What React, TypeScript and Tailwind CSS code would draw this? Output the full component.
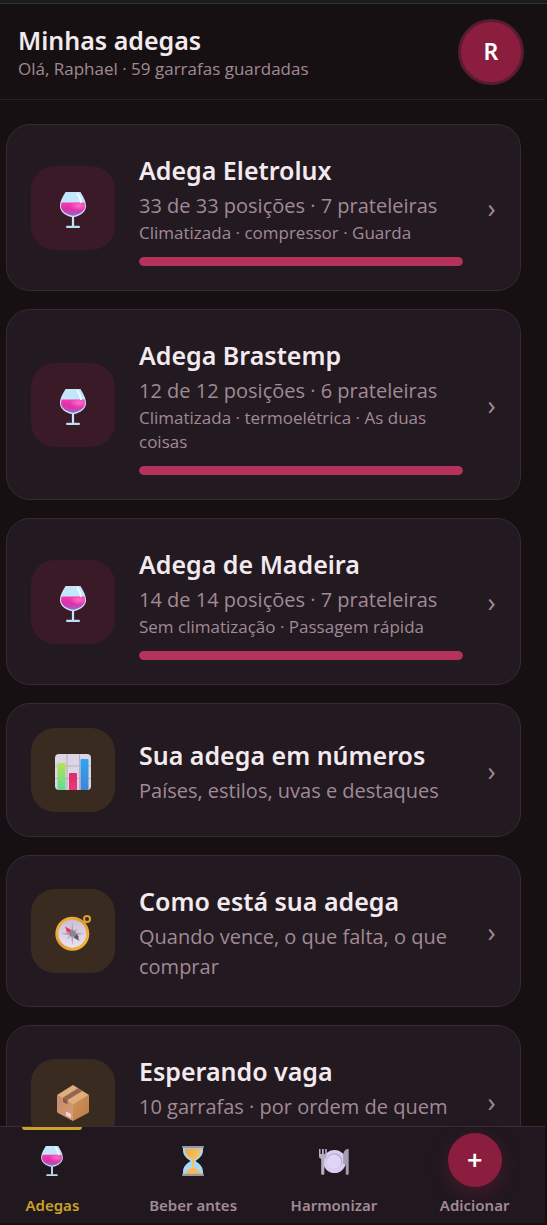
import { useId, useState } from 'react'
import type { ReactNode } from 'react'

interface IconProps {
  className?: string
}

function WineIcon({ className }: IconProps) {
  const id = useId()
  return (
    <svg className={className} viewBox="0 0 36 36" fill="none" aria-hidden="true">
      <defs>
        <linearGradient id={`${id}-wine`} x1="0" y1="0" x2="0" y2="1">
          <stop offset="0" stopColor="#f23bb0" />
          <stop offset="0.5" stopColor="#e02fa8" />
          <stop offset="1" stopColor="#a063c4" />
        </linearGradient>
        <radialGradient id={`${id}-shine`} cx="0.75" cy="0.25" r="0.4">
          <stop offset="0" stopColor="#ff6fc6" />
          <stop offset="1" stopColor="#ff6fc6" stopOpacity="0" />
        </radialGradient>
      </defs>
      <path d="M10.500 0h15c1.800 3.600 5.500 8 5.500 14.500 0 5-5.500 9.300-11.500 10.500h-3C10.500 23.800 5 19.500 5 14.500 5 8 8.700 3.600 10.500 0z" fill="#c3e6fb" />
      <path d="M6.800 10.500h22.400c.5 1.300.8 2.600.8 4 0 4.300-5.500 8.300-12 9.300-6.500-1-12-5-12-9.300 0-1.400.3-2.700.8-4z" fill={`url(#${id}-wine)`} />
      <path d="M6.800 10.500h22.400c.5 1.300.8 2.600.8 4 0 4.300-5.500 8.300-12 9.300-6.500-1-12-5-12-9.300 0-1.400.3-2.700.8-4z" fill={`url(#${id}-shine)`} />
      <path d="M22.500 2c1.800 2.500 3 5 3.500 8" stroke="#f2fbff" strokeWidth="2" strokeLinecap="round" />
      <path d="M16.900 24.500h2.200v10h-2.200z" fill="#c3e6fb" />
      <rect x="11" y="33.800" width="14" height="2.200" rx="1.100" fill="#b9dff0" />
    </svg>
  )
}

function ChartIcon({ className }: IconProps) {
  const id = useId()
  return (
    <svg className={className} viewBox="0 0 36 36" fill="none" aria-hidden="true">
      <defs>
        <linearGradient id={`${id}-green`} x1="0" y1="0" x2="0" y2="1">
          <stop offset="0" stopColor="#b5e256" />
          <stop offset="1" stopColor="#62dc90" />
        </linearGradient>
        <linearGradient id={`${id}-pink`} x1="0" y1="0" x2="0" y2="1">
          <stop offset="0" stopColor="#d92f68" />
          <stop offset="1" stopColor="#f0357c" />
        </linearGradient>
        <linearGradient id={`${id}-blue`} x1="0" y1="0" x2="0" y2="1">
          <stop offset="0" stopColor="#2fa5f3" />
          <stop offset="1" stopColor="#4383d3" />
        </linearGradient>
      </defs>
      <rect width="36" height="36" rx="4" fill="#dcd5e3" />
      <path d="M12 0v36M24.500 0v36M0 12h36M0 24.500h36" stroke="#b9b1c3" strokeWidth="1" />
      <path d="M2.500 10a1 1 0 011-1h6a1 1 0 011 1v26H4a1.500 1.500 0 01-1.500-1.500z" fill={`url(#${id}-green)`} />
      <path d="M14 20a1 1 0 011-1h6a1 1 0 011 1v16h-8z" fill={`url(#${id}-pink)`} />
      <path d="M25.500 6a1 1 0 011-1h6a1 1 0 011 1v28.500A1.500 1.500 0 0132 36h-6.500z" fill={`url(#${id}-blue)`} />
    </svg>
  )
}

function CompassIcon({ className }: IconProps) {
  const id = useId()
  return (
    <svg className={className} viewBox="0 0 36 36" fill="none" aria-hidden="true">
      <defs>
        <linearGradient id={`${id}-ring`} x1="0" y1="0" x2="1" y2="1">
          <stop offset="0" stopColor="#f2b63c" />
          <stop offset="0.5" stopColor="#e39a33" />
          <stop offset="1" stopColor="#f4c03f" />
        </linearGradient>
        <linearGradient id={`${id}-face`} x1="0" y1="0" x2="0" y2="1">
          <stop offset="0" stopColor="#c9bdd3" />
          <stop offset="1" stopColor="#ebe3f2" />
        </linearGradient>
      </defs>
      <circle cx="32" cy="4" r="3" stroke="#dd9f2c" strokeWidth="2" />
      <path d="M26 7.500l3.500-2 1.800 2.500-2.300 3z" fill="#e2a32f" />
      <circle cx="17.300" cy="18.700" r="15.500" fill={`url(#${id}-face)`} stroke={`url(#${id}-ring)`} strokeWidth="3" />
      <path d="M17.300 7.500l1.200 9.500 10 1.700-10 1.700-1.200 9.500-1.200-9.500-10-1.700 10-1.700z" fill="#aaa2b2" />
      <path d="M12.500 14l9.600 9.600M22.200 14l-9.700 9.600" stroke="#b6aebe" strokeWidth="1.500" />
      <path d="M10 11.500l6.500 3.500-2.500 3-2.500-1.500-.5-2.500z" fill="#ef3560" />
      <path d="M24.500 26l-6-3.500 3-3.500 2 2v3z" fill="#5d5762" />
      <circle cx="17.500" cy="18.500" r="3.300" fill="#8c8492" />
    </svg>
  )
}

function BoxIcon({ className }: IconProps) {
  const id = useId()
  return (
    <svg className={className} viewBox="0 0 36 36" fill="none" aria-hidden="true">
      <defs>
        <linearGradient id={`${id}-left`} x1="0" y1="0" x2="1" y2="1">
          <stop offset="0" stopColor="#c58b6f" />
          <stop offset="1" stopColor="#d79a72" />
        </linearGradient>
        <linearGradient id={`${id}-right`} x1="0" y1="0" x2="1" y2="1">
          <stop offset="0" stopColor="#cf955c" />
          <stop offset="1" stopColor="#bd7a48" />
        </linearGradient>
      </defs>
      <path d="M2 10l16 9v17L3 28a2 2 0 01-1-1.700z" fill={`url(#${id}-left)`} />
      <path d="M34 10l-16 9v17l15-8a2 2 0 001-1.700z" fill={`url(#${id}-right)`} />
      <path d="M18 0l16 10-16 9.500L2 10z" fill="#dfae7b" />
      <path d="M23 3.200l4.500 2.700L12.500 15 8 12.500z" fill="#96654f" />
      <path d="M8 12.500l4.500 2.500v4.500L8 17z" fill="#88594a" />
      <path d="M11 26.500l5 2.500v4l-5-2.500z" fill="#e5d9e6" />
    </svg>
  )
}

function HourglassIcon({ className }: IconProps) {
  const id = useId()
  return (
    <svg className={className} viewBox="0 0 30 30" fill="none" aria-hidden="true">
      <defs>
        <linearGradient id={`${id}-sand`} x1="0" y1="0" x2="1" y2="1">
          <stop offset="0" stopColor="#f0a93f" />
          <stop offset="1" stopColor="#ffd36b" />
        </linearGradient>
      </defs>
      <path d="M5 1h20v3c0 5-3 8-7.500 11C22 18 25 21 25 26v3H5v-3c0-5 3-8 7.500-11C8 12 5 9 5 4z" fill="#a8d8f7" />
      <path d="M7 3h16c0 5-2.500 8-7 10.500v9.500h-2v-9.500C9.500 11 7 8 7 3z" fill={`url(#${id}-sand)`} />
      <path d="M8 28c0-3.500 3.500-6 7-6s7 2.500 7 6z" fill="#f9b65c" />
      <rect x="4" y="0" width="22" height="2.200" rx="1" fill="#99989f" />
      <rect x="4" y="27.800" width="22" height="2.200" rx="1" fill="#99989f" />
    </svg>
  )
}

function PlateIcon({ className }: IconProps) {
  return (
    <svg className={className} viewBox="0 0 30 30" fill="none" aria-hidden="true">
      <circle cx="15.500" cy="15.500" r="11.500" fill="#d9cdf2" />
      <circle cx="15.500" cy="15" r="7.800" fill="#b9abdb" />
      <circle cx="15" cy="15.800" r="7.200" fill="#dfd5f6" />
      <path d="M0 3h1.500v5H3V3h1.800v5h1.400V3h1.600v7.500C7.800 12 6.500 13 5.300 13v15a.8.8 0 01-.8.8H3a.8.8 0 01-.8-.8V13C1 12.600 0 11.600 0 10.500z" fill="#b7adc0" />
      <path d="M29.700 3v25a.8.8 0 01-.8.800h-1.300a.8.8 0 01-.8-.8V18H25a.8.8 0 01-.8-.8V10c0-4 2-7 4.500-7z" fill="#a59cae" />
    </svg>
  )
}

interface Cellar {
  name: string
  used: number
  total: number
  shelves: number
  notes: string
}

const cellars: Cellar[] = [
  { name: 'Adega Eletrolux', used: 33, total: 33, shelves: 7, notes: 'Climatizada · compressor · Guarda' },
  { name: 'Adega Brastemp', used: 12, total: 12, shelves: 6, notes: 'Climatizada · termoelétrica · As duas coisas' },
  { name: 'Adega de Madeira', used: 14, total: 14, shelves: 7, notes: 'Sem climatização · Passagem rápida' },
]

const shortcuts = [
  { title: 'Sua adega em números', text: 'Países, estilos, uvas e destaques', Icon: ChartIcon },
  { title: 'Como está sua adega', text: 'Quando vence, o que falta, o que comprar', Icon: CompassIcon },
  { title: 'Esperando vaga', text: '10 garrafas · por ordem de quem chegou', Icon: BoxIcon },
]

const tabs = [
  { id: 'adegas', label: 'Adegas', Icon: WineIcon },
  { id: 'beber', label: 'Beber antes', Icon: HourglassIcon },
  { id: 'harmonizar', label: 'Harmonizar', Icon: PlateIcon },
]

interface CardProps {
  icon: ReactNode
  iconBg: string
  title: string
  text: string
  children?: ReactNode
}

function Card({ icon, iconBg, title, text, children }: CardProps) {
  return (
    <a
      href="#"
      className="flex shrink-0 items-center gap-6 rounded-3xl border border-[#382932] bg-[#231920] p-6"
    >
      <div className={`flex size-21 shrink-0 items-center justify-center rounded-3xl pt-1 ${iconBg}`}>{icon}</div>
      <div className="min-w-0 flex-1">
        <h2 className="font-['Noto_Sans',sans-serif] text-[25px] leading-[42px] font-semibold text-[#f3eaee]">{title}</h2>
        <p className="text-[20px] leading-[30px] text-[#a08a95]">{text}</p>
        {children}
      </div>
      <span className="w-[9px] shrink-0 text-center text-[27px] leading-none text-[#a08a95]">›</span>
    </a>
  )
}

export default function App() {
  const [active, setActive] = useState('adegas')

  return (
    <div className="flex h-screen flex-col bg-[#171012] pr-[2px] pb-[2px] font-['Open_Sans','Noto_Sans',sans-serif]">
      <div className="-mr-[2px] h-1 shrink-0 border-b border-[#33302f] bg-[#1b1d1b]" />

      <header className="flex h-24 shrink-0 items-center justify-between border-b border-[#2a2025] pr-6 pl-[18px]">
        <div>
          <h1 className="font-['Noto_Sans',sans-serif] text-[25px] leading-[34px] font-semibold text-[#f3eaee]">
            Minhas adegas
          </h1>
          <p className="text-[17px] leading-6 text-[#a08a95]">Olá, Raphael · 59 garrafas guardadas</p>
        </div>
        <button
          type="button"
          aria-label="Perfil"
          className="size-15 rounded-full bg-[#8b1e3f] font-['Noto_Sans',sans-serif] text-[23px] font-semibold text-white ring-3 ring-[#571c30]"
        >
          R
        </button>
      </header>

      <main className="flex min-h-0 flex-1 flex-col gap-[18px] overflow-y-auto pt-6 pr-6 pl-[6px] [scrollbar-width:none]">
        {cellars.map((c) => (
          <Card
            key={c.name}
            icon={<WineIcon className="size-9" />}
            iconBg="bg-[#3b1a27]"
            title={c.name}
            text={`${c.used} de ${c.total} posições · ${c.shelves} prateleiras`}
          >
            <p className="text-[17px] leading-6 text-[#a08a95]">{c.notes}</p>
            <div className="mt-3 h-[9px] overflow-hidden rounded-full bg-[#3b1a27]">
              <div className="h-full rounded-full bg-[#b5325a]" style={{ width: `${(c.used / c.total) * 100}%` }} />
            </div>
          </Card>
        ))}
        {shortcuts.map(({ title, text, Icon }) => (
          <Card key={title} icon={<Icon className="size-9" />} iconBg="bg-[#3a2b21]" title={title} text={text} />
        ))}
      </main>

      <nav className="grid shrink-0 grid-cols-4 gap-9 border-t border-[#3a2b34] bg-[#21181f] pr-[18px] font-['Noto_Sans',sans-serif] text-[15px] leading-6 font-semibold text-[#a08a95]">
        {tabs.map(({ id, label, Icon }) => (
          <button
            key={id}
            type="button"
            onClick={() => setActive(id)}
            className={`relative flex flex-col items-center gap-[6px] py-[6px] whitespace-nowrap ${active === id ? 'text-[#c9a227]' : ''}`}
          >
            {active === id && <span className="absolute top-0 h-[3px] w-15 rounded-b-sm bg-[#c9a227]" />}
            <span className="flex h-[54px] items-center justify-center pt-[2px]">
              <Icon className="size-[30px]" />
            </span>
            {label}
          </button>
        ))}
        <button type="button" className="flex flex-col items-center gap-[6px] py-[6px] whitespace-nowrap">
          <span className="flex size-[54px] items-center justify-center rounded-full bg-[#8b1e3f] text-[27px] text-white shadow-[0_6px_18px_rgba(139,30,63,0.35)]">
            +
          </span>
          Adicionar
        </button>
      </nav>
    </div>
  )
}
